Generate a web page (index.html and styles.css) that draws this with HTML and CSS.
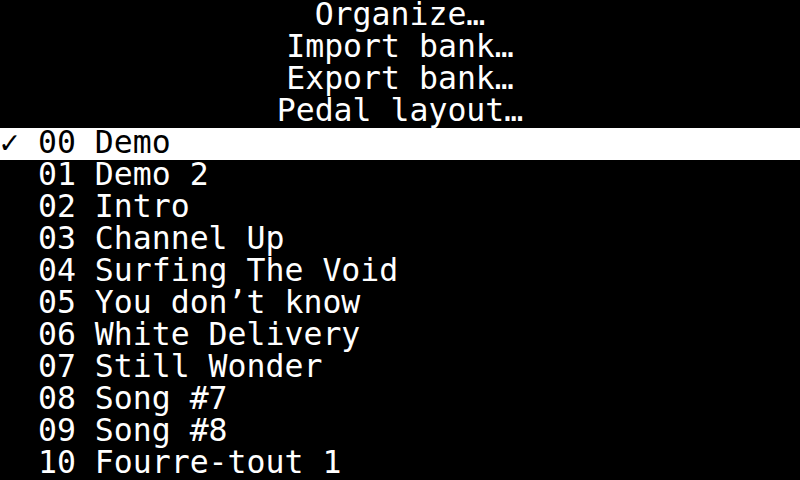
FILE: index.html
```html
<!DOCTYPE html>
<html>
<head>
<meta charset="utf-8">
<link rel="stylesheet" href="styles.css">
</head>
<body>
<div class="screen">
  <div class="menu">
    <div class="menu-item">Organize…</div>
    <div class="menu-item">Import bank…</div>
    <div class="menu-item">Export bank…</div>
    <div class="menu-item">Pedal layout…</div>
  </div>
  <div class="list">
    <div class="row selected">✓ 00 Demo</div>
    <div class="row">  01 Demo 2</div>
    <div class="row">  02 Intro</div>
    <div class="row">  03 Channel Up</div>
    <div class="row">  04 Surfing The Void</div>
    <div class="row">  05 You don’t know</div>
    <div class="row">  06 White Delivery</div>
    <div class="row">  07 Still Wonder</div>
    <div class="row">  08 Song #7</div>
    <div class="row">  09 Song #8</div>
    <div class="row">  10 Fourre-tout 1</div>
  </div>
</div>
</body>
</html>
```
FILE: styles.css
```css
html, body {
  margin: 0;
  padding: 0;
  background: #000;
}
.screen {
  width: 800px;
  height: 480px;
  overflow: hidden;
  background: #000;
  color: #fff;
  font-family: "DejaVu Sans Mono", monospace;
  font-size: 31.5px;
  line-height: 28px;
  display: flex;
  flex-direction: column;
}
.menu {
  display: flex;
  flex-direction: column;
}
.menu-item {
  height: 28px;
  padding-bottom: 4px;
  text-align: center;
  white-space: pre;
}
.list {
  display: flex;
  flex-direction: column;
}
.row {
  height: 28px;
  padding-bottom: 4px;
  white-space: pre;
}
.row.selected {
  background: #fff;
  color: #000;
}
```
